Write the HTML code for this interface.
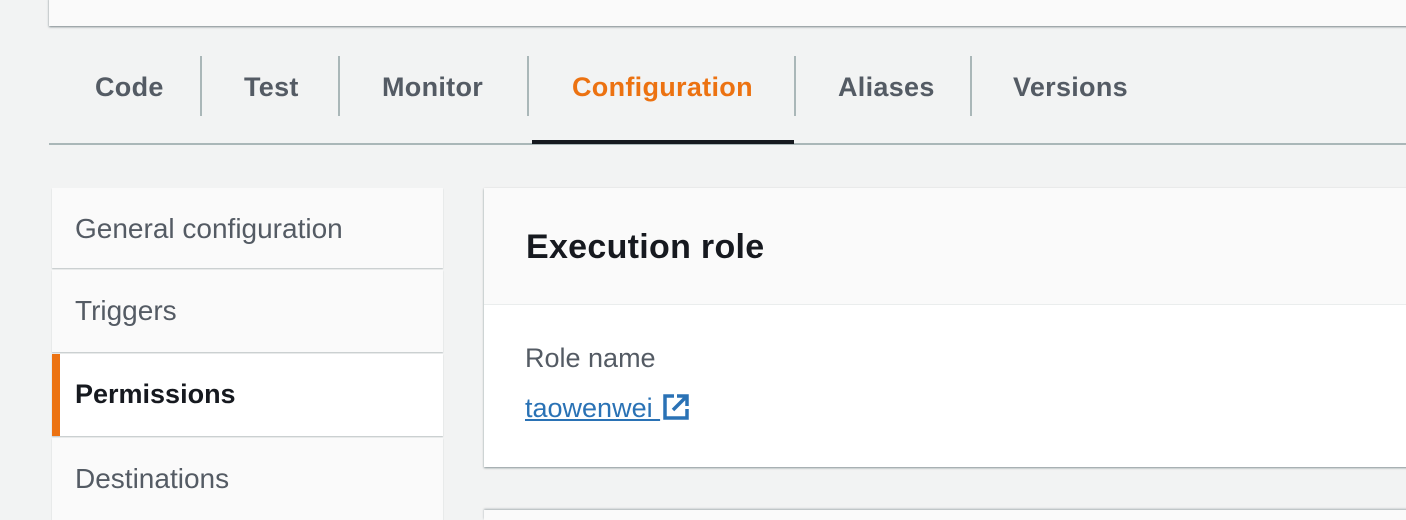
<!DOCTYPE html>
<html style="overflow:hidden;height:520px"><head><style>
body{margin:0;width:1406px;height:520px;background:#f2f3f3;font-family:"Liberation Sans",sans-serif;position:relative;overflow:hidden}
.abs{position:absolute}
.top{left:49px;top:-2px;width:1400px;height:28px;background:#fafafa;box-shadow:0 1px 2px rgba(0,28,36,.5)}
.tab{position:absolute;top:71px;font-size:27px;letter-spacing:0.3px;font-weight:bold;color:#545b64;line-height:32px}
.sep{position:absolute;top:56px;width:2px;height:60px;background:#aab7b8}
.nav{position:absolute;left:52px;width:391px;background:#fafafa;box-shadow:0 1px 1px rgba(0,28,36,.2);font-size:28px;color:#545b64}
.nav span{position:absolute;left:23px;top:25px}
</style></head><body>
<div class="abs top"></div>
<div class="tab" style="left:95px">Code</div>
<div class="sep" style="left:200px"></div>
<div class="tab" style="left:244px">Test</div>
<div class="sep" style="left:338px"></div>
<div class="tab" style="left:382px">Monitor</div>
<div class="sep" style="left:527px"></div>
<div class="tab" style="left:572px;color:#ec7211">Configuration</div>
<div class="sep" style="left:794px"></div>
<div class="tab" style="left:838px">Aliases</div>
<div class="sep" style="left:970px"></div>
<div class="tab" style="left:1013px">Versions</div>
<div class="abs" style="left:49px;top:143px;width:1357px;height:2px;background:#aab7b8"></div>
<div class="abs" style="left:532px;top:140px;width:262px;height:4px;background:#16191f"></div>

<div class="nav" style="top:188px;height:80px"><span>General configuration</span></div>
<div class="nav" style="top:270px;height:82px"><span>Triggers</span></div>
<div class="nav" style="top:354px;height:82px;background:#fff;color:#16191f;font-weight:bold;font-size:27px"><div class="abs" style="left:0;top:0;width:8px;height:82px;background:#ec7211"></div><span>Permissions</span></div>
<div class="nav" style="top:438px;height:90px"><span>Destinations</span></div>

<div class="abs" style="left:484px;top:188px;width:930px;height:279px;background:#fff;box-shadow:0 1px 2px rgba(0,28,36,.45)">
<div class="abs" style="left:0;top:0;width:100%;height:116px;background:#fafafa;border-bottom:1px solid #eaeded"></div>
<div class="abs" style="left:42px;top:40px;font-size:34px;letter-spacing:0.3px;font-weight:bold;color:#16191f">Execution role</div>
<div class="abs" style="left:41px;top:155px;font-size:27px;color:#545b64">Role name</div>
<div class="abs" style="left:41px;top:205px;font-size:27px;color:#2a72b5;white-space:nowrap;text-decoration:underline">taowenwei&nbsp;<svg width="28" height="28" viewBox="0 0 28 28" style="vertical-align:-4px;margin-left:2px"><path d="M12 3H3v22h22v-9" fill="none" stroke="#2a72b5" stroke-width="3.5"/><path d="M11 17L24 4M15 3h10v10" fill="none" stroke="#2a72b5" stroke-width="3.5"/></svg></div>
</div>
<div class="abs" style="left:484px;top:510px;width:930px;height:10px;background:#fafafa;box-shadow:0 -1px 2px rgba(0,28,36,.3)"></div>
</body></html>
